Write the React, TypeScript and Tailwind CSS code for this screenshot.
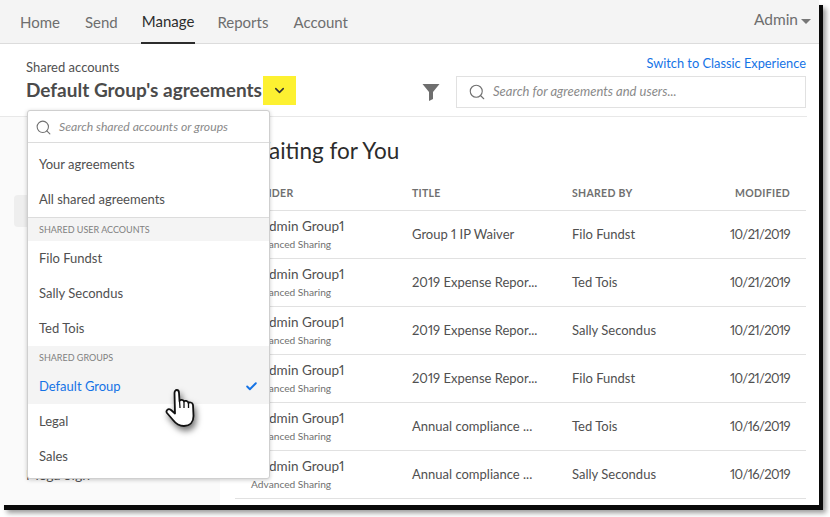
import React from "react";
import { ChevronDown, Search, Check } from "lucide-react";

const rows = [
  ["Group 1 IP Waiver", "Filo Fundst", "10/21/2019"],
  ["2019 Expense Repor...", "Ted Tois", "10/21/2019"],
  ["2019 Expense Repor...", "Sally Secondus", "10/21/2019"],
  ["2019 Expense Repor...", "Filo Fundst", "10/21/2019"],
  ["Annual compliance ...", "Ted Tois", "10/16/2019"],
  ["Annual compliance ...", "Sally Secondus", "10/16/2019"],
];

function MenuItem({ label }: { label: string }) {
  return <div className="h-[35px] pl-[11px] flex items-center text-[13px] text-[#505050]">{label}</div>;
}

function Hand() {
  return (
    <svg
      width="30"
      height="40"
      viewBox="0 0 30 40"
      className="absolute left-[165px] top-[388px] drop-shadow-[2px_4px_3px_rgba(0,0,0,0.55)]"
    >
      <path
        d="M9.5 5C9.5 1 14 1 14 5L14.5 13C15 11.5 18.5 11.5 19 13.5C19.5 12.5 23 12.5 23.5 15C24 14 27.5 14 28 17L28.5 28C28.5 34 25 38 19 38C14 38 11 36 8 32L2 25C.5 23 3 19.5 6 22L10 25.5Z"
        fill="#fff"
        stroke="#111"
        strokeWidth="1.8"
        strokeLinejoin="round"
      />
      <path d="M14.5 13L15 20M19 13.5V20M23.5 15V20" fill="none" stroke="#111" strokeWidth="1.3" />
    </svg>
  );
}

export default function App() {
  return (
    <div className="w-[830px] h-[517px] bg-white overflow-hidden proportional-nums font-['Lato','Liberation_Sans',sans-serif]">
      <div className="relative w-[819px] h-[505px] bg-white flex flex-col overflow-visible shadow-[4px_5px_0_#0a0a0a,7px_8px_5px_rgba(0,0,0,0.4)]">
        <nav className="h-[44px] shrink-0 bg-[#f4f4f4] border-b border-[#dcdcdc] flex items-stretch pl-5 pr-[8px] text-[15px] text-[#6e6e6e]">
          <div className="flex items-center mr-[25px] pt-[1px]">Home</div>
          <div className="flex items-center mr-[23px] pt-[1px]">Send</div>
          <div className="flex items-center mr-[22px] text-[#2c2c2c] border-b-2 border-[#2c2c2c] h-[44px] px-px pt-[1px]">Manage</div>
          <div className="flex items-center mr-[25px] pt-[1px]">Reports</div>
          <div className="flex items-center pt-[1px]">Account</div>
          <div className="ml-auto flex items-center gap-[3px] pb-[3px] text-[15.5px]">
            Admin
            <span className="w-0 h-0 mt-[2px] border-x-[5px] border-x-transparent border-t-[5px] border-t-[#777]" />
          </div>
        </nav>

        <header className="h-[73px] shrink-0 mr-[12px] pr-[1px] border-b border-[#e8e8e8] flex pl-[26px] relative">
          <div className="pt-[16px]">
            <div className="text-[13px] leading-[14px] text-[#505050]">Shared accounts</div>
            <div className="flex items-center mt-[2px]">
              <div className="text-[19px] font-bold text-[#4b4b4b] leading-[29px] w-[237px] whitespace-nowrap h-[29px] -mt-[2px] pb-[2px]">
                Default Group's agreements
              </div>
              <div className="w-[33px] h-[29px] bg-[#fdf131] flex items-center justify-center">
                <ChevronDown size={15} strokeWidth={2.5} className="text-[#333]" />
              </div>
            </div>
          </div>
          <div className="ml-auto flex flex-col items-end pt-[11px]">
            <div className="text-[12.8px] leading-[16px] text-[#1473e6] mb-[5px]">Switch to Classic Experience</div>
            <div className="flex items-center">
              <svg width="18" height="18" viewBox="0 0 18 18" className="mr-[16px]">
                <path d="M.5 1H17.5L11 9V16L7 18V9Z" fill="#6e6e6e" />
              </svg>
              <div className="w-[350px] h-[32px] border border-[#e1e1e1] flex items-center pl-[11px] gap-[7px] text-[13px] italic text-[#8a8a8a]">
                <Search size={18} strokeWidth={1.5} className="text-[#707070]" />
                Search for agreements and users...
              </div>
            </div>
          </div>
        </header>

        <div className="flex-1 flex min-h-0">
          <aside className="w-[220px] shrink-0 bg-[#fafafa] flex flex-col relative">
            <div className="ml-[14px] mt-[78px] h-[32px] bg-[#eeeeee] rounded-l" />
            <div className="ml-[26px] mt-auto mb-[23px] text-[14px] leading-[14px] text-[#505050]">Mega Sign</div>
          </aside>

          <main className="flex-1 pl-[15px] pr-[13px]">
            <h1 className="pl-[12px] pt-[18px] text-[22.5px] leading-[32px] text-[#2c2c2c] h-[57px]">Waiting for You</h1>
            <div className="h-[37px] flex items-center pl-4 pr-4 pt-[4px] border-b border-[#e1e1e1] text-[10.5px] font-bold tracking-[0.3px] text-[#707070]">
              <div className="w-[161px]">SENDER</div>
              <div className="w-[160px]">TITLE</div>
              <div className="flex-1">SHARED BY</div>
              <div>MODIFIED</div>
            </div>
            {rows.map((r, i) => (
              <div key={i} className="h-[48px] flex items-center pl-4 pr-4 border-b border-[#e1e1e1] text-[13px] text-[#505050]">
                <div className="w-[161px]">
                  <div className="text-[13.5px] leading-[18px] pl-[9px]">Admin Group1</div>
                  <div className="text-[10.2px] leading-[15px] text-[#707070] mt-[2px]">Advanced Sharing</div>
                </div>
                <div className="w-[160px] whitespace-nowrap">{r[0]}</div>
                <div className="flex-1 whitespace-nowrap">{r[1]}</div>
                <div className="tracking-[-0.6px]">{r[2]}</div>
              </div>
            ))}
          </main>
        </div>

        <div className="absolute left-[27px] top-[110px] w-[243px] h-[369px] bg-white border border-[#cfcfcf] rounded-[3px] shadow-[0_1px_4px_rgba(0,0,0,0.2)] flex flex-col">
          <div className="h-[32px] border-b border-[#dcdcdc] flex items-center pl-[7px] pt-[1px] gap-[7px] text-[12.2px] italic text-[#8a8a8a] shrink-0">
            <Search size={17} strokeWidth={1.5} className="text-[#707070]" />
            Search shared accounts or groups
          </div>
          <div className="pt-[4px] border-b border-[#dcdcdc]">
            <MenuItem label="Your agreements" />
            <MenuItem label="All shared agreements" />
          </div>
          <div className="bg-[#f4f4f4] pl-[11px] flex items-center text-[9px] text-[#808080] h-[23px]">SHARED USER ACCOUNTS</div>
          <MenuItem label="Filo Fundst" />
          <MenuItem label="Sally Secondus" />
          <MenuItem label="Ted Tois" />
          <div className="bg-[#f4f4f4] pl-[11px] flex items-center text-[9px] text-[#808080] h-[23px]">SHARED GROUPS</div>
          <div className="h-[35px] pl-[11px] pr-[11px] bg-[#f4f4f4] flex items-center justify-between text-[13px] text-[#1473e6]">
            Default Group
            <Check size={13} strokeWidth={3.5} />
          </div>
          <MenuItem label="Legal" />
          <MenuItem label="Sales" />
        </div>

        <Hand />
      </div>
    </div>
  );
}
